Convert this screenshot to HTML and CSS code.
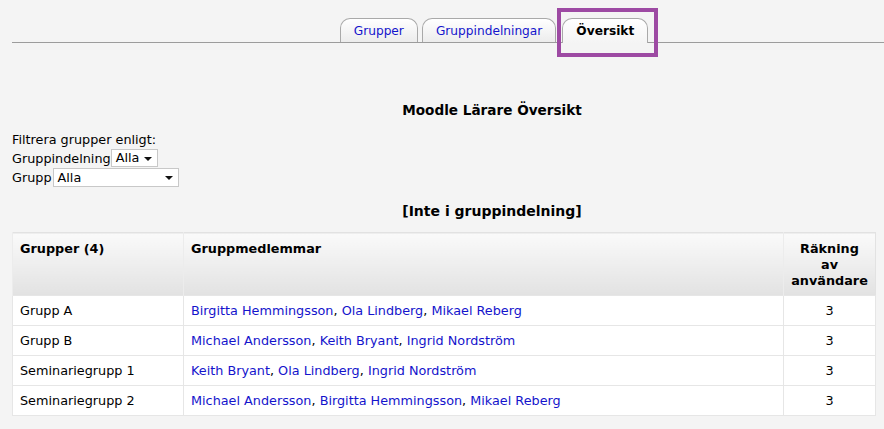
FILE: index.html
```html
<!DOCTYPE html>
<html lang="sv">
<head>
<meta charset="utf-8">
<title>Moodle Lärare Översikt</title>
<link rel="stylesheet" href="styles.css">
</head>
<body>
<div class="page">
  <div class="tabrow">
    <ul class="tabs">
      <li class="tab"><a href="#">Grupper</a></li>
      <li class="tab"><a href="#">Gruppindelningar</a></li>
      <li class="tab active"><span>Översikt</span><span class="highlight"></span></li>
    </ul>
  </div>

  <h2 class="title">Moodle Lärare Översikt</h2>

  <div class="filters">
    <div class="filter-head">Filtrera grupper enligt:</div>
    <div class="filter-line first">
      <label>Gruppindelning</label><span class="select small"><span class="val">Alla</span><span class="arrow"></span></span>
    </div>
    <div class="filter-line second">
      <label>Grupp</label><span class="select wide"><span class="val">Alla</span><span class="arrow"></span></span>
    </div>
  </div>

  <h3 class="grouping">[Inte i gruppindelning]</h3>

  <table class="overview">
    <colgroup>
      <col class="w1">
      <col class="w2">
      <col class="w3">
    </colgroup>
    <thead>
      <tr>
        <th class="c1">Grupper (4)</th>
        <th class="c2">Gruppmedlemmar</th>
        <th class="c3">Räkning<br>av<br>användare</th>
      </tr>
    </thead>
    <tbody>
      <tr>
        <td class="c1">Grupp A</td>
        <td class="c2"><a href="#">Birgitta Hemmingsson</a>, <a href="#">Ola Lindberg</a>, <a href="#">Mikael Reberg</a></td>
        <td class="c3">3</td>
      </tr>
      <tr>
        <td class="c1">Grupp B</td>
        <td class="c2"><a href="#">Michael Andersson</a>, <a href="#">Keith Bryant</a>, <a href="#">Ingrid Nordström</a></td>
        <td class="c3">3</td>
      </tr>
      <tr>
        <td class="c1">Seminariegrupp 1</td>
        <td class="c2"><a href="#">Keith Bryant</a>, <a href="#">Ola Lindberg</a>, <a href="#">Ingrid Nordström</a></td>
        <td class="c3">3</td>
      </tr>
      <tr>
        <td class="c1">Seminariegrupp 2</td>
        <td class="c2"><a href="#">Michael Andersson</a>, <a href="#">Birgitta Hemmingsson</a>, <a href="#">Mikael Reberg</a></td>
        <td class="c3">3</td>
      </tr>
    </tbody>
  </table>
</div>
</body>
</html>
```

FILE: styles.css
```css
html, body {
  margin: 0;
  padding: 0;
  overflow: hidden;
}
body {
  background: #f4f4f4;
  font-family: "DejaVu Sans", Verdana, sans-serif;
  font-size: 12.8px;
  color: #000;
}
a {
  color: #1414cc;
  text-decoration: none;
}
.page {
  width: 960px;
  margin-left: 12px;
}
.tabrow {
  padding-top: 18px;
  padding-left: 4px;
  height: 24px;
  border-bottom: 1px solid #9c9c9c;
  display: flex;
  justify-content: center;
}
.tabs {
  list-style: none;
  margin: 0;
  padding: 0;
  display: flex;
  gap: 4px;
  align-items: flex-start;
  font-size: 12.2px;
}
.tab {
  position: relative;
  box-sizing: border-box;
  height: 24px;
  border: 1px solid #a9a9a9;
  border-bottom: none;
  border-radius: 10px 10px 0 0;
  background: linear-gradient(#ffffff, #ececec);
  padding: 1px 13px 0 13px;
  display: flex;
  align-items: center;
}
.tab.active {
  margin-left: 2px;
  height: 25px;
  background: linear-gradient(#ffffff, #f4f4f4);
  font-weight: bold;
  padding: 0 13px 1px 13px;
}
.highlight {
  position: absolute;
  left: -6px;
  top: -11px;
  width: 93px;
  height: 41px;
  border: 4px solid #9d4aa3;
}
.title {
  margin: 59px 0 0;
  text-align: center;
  font-size: 13.6px;
  font-weight: bold;
  line-height: 16px;
}
.filters {
  margin-top: 13px;
}
.filter-head {
  line-height: 18px;
}
.filter-line {
  display: flex;
  align-items: center;
}
.filter-line.first {
  height: 18px;
}
.filter-line.second {
  height: 20px;
}
.select {
  position: relative;
  display: inline-block;
  background: #fff;
  border: 1px solid #c8c8c8;
  height: 16px;
  line-height: 16px;
  box-sizing: content-box;
}
.select .val {
  padding-left: 4px;
}
.select.small {
  width: 45px;
  margin-left: 0;
}
.select.wide {
  width: 124px;
  height: 17px;
  line-height: 17px;
  margin-left: 1px;
}
.arrow {
  position: absolute;
  right: 5px;
  top: 7px;
  width: 0;
  height: 0;
  border-left: 4px solid transparent;
  border-right: 4px solid transparent;
  border-top: 4px solid #111;
}
.grouping {
  margin: 15px 0 0;
  text-align: center;
  font-size: 14px;
  font-weight: bold;
  line-height: 18px;
}
.overview {
  margin-top: 12px;
  width: 863px;
  table-layout: fixed;
  border-collapse: collapse;
  background: #fff;
  border: 1px solid #e2e2e2;
}
.w1 { width: 171px; }
.w2 { width: 600px; }
.w3 { width: 92px; }
.overview th {
  background: linear-gradient(#fafafa, #e2e2e2);
  font-weight: bold;
  text-align: left;
  vertical-align: top;
  padding: 8px 7px 6px;
  line-height: 16px;
  border-left: 1px solid #ececec;
}
.overview th.c3 {
  text-align: center;
  padding: 8px 2px 6px;
}
.overview td {
  height: 29px;
  padding: 0 7px;
  border: 1px solid #e6e6e6;
  vertical-align: middle;
}
.overview td.c3 {
  padding: 0 2px;
  text-align: center;
}
```
